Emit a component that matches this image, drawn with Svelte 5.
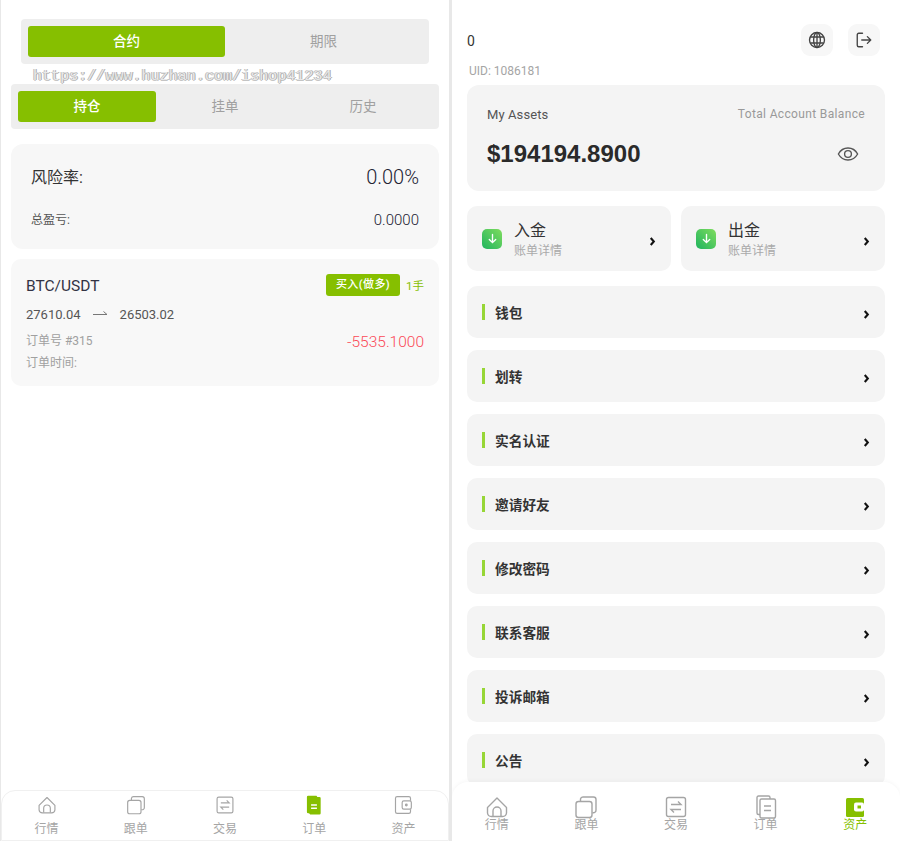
<script>
  const rows = ['钱包', '划转', '实名认证', '邀请好友', '修改密码', '联系客服', '投诉邮箱', '公告'];
  const money = [
    { title: '入金', sub: '账单详情' },
    { title: '出金', sub: '账单详情' }
  ];
  const tabs = ['行情', '跟单', '交易', '订单', '资产'];
</script>

{#snippet tabIcon(i, on)}
  {#if i === 0}
    <svg viewBox="0 0 24 24" width="24" height="24" fill="none" stroke="currentColor" stroke-width="1.4">
      <path d="M2.5 12.5 12 3l9.5 9.5V18a4 4 0 0 1-4 3.5h-11a4 4 0 0 1-4-3.500z" stroke-linejoin="round" />
      <path d="M8 21v-5a4 4 0 0 1 8 0v5" />
    </svg>
  {:else if i === 1}
    <svg viewBox="0 0 24 24" width="24" height="24" fill="none" stroke="currentColor" stroke-width="1.4">
      <rect x="2" y="6.5" width="16" height="16" rx="2.5" />
      <path d="M6.500 6V4a2.500 2.500 0 0 1 2.500-2h10.500A2.500 2.500 0 0 1 22 4.500V15a2.500 2.500 0 0 1-3.500 2.500" />
    </svg>
  {:else if i === 2}
    <svg viewBox="0 0 24 24" width="24" height="24" fill="none" stroke="currentColor" stroke-width="1.4">
      <rect x="2.500" y="2.500" width="19" height="19" rx="2" />
      <path d="M7 9.500h10l-3-3M17 14.500H7l3 3" />
    </svg>
  {:else if i === 3}
    {#if on}
      <svg viewBox="0 0 24 24" width="24" height="24">
        <path d="M5 1h10l1 1.500h2.500A1.500 1.500 0 0 1 20 4v18a1.500 1.500 0 0 1-1.500 1.500h-11L6 22H5a1.500 1.500 0 0 1-1.500-1.500v-18A1.500 1.500 0 0 1 5 1z" fill="#86bf00" />
        <path d="M8.500 11h7v1.800h-7zM8.500 15h7v1.800h-7z" fill="#fff" />
      </svg>
    {:else}
      <svg viewBox="0 0 24 24" width="24" height="24" fill="none" stroke="currentColor" stroke-width="1.4">
        <path d="M6 19.500H4.500A1.500 1.500 0 0 1 3 18V2.500A1.500 1.500 0 0 1 4.500 1h10A1.500 1.500 0 0 1 16 2.500V4" />
        <rect x="6" y="4" width="15.500" height="19" rx="1.500" />
        <path d="M10 11h7M10 15.500h7" />
      </svg>
    {/if}
  {:else if on}
    <svg viewBox="0 0 24 24" width="24" height="24">
      <rect x="3" y="3" width="18" height="19" rx="1.500" fill="#86bf00" />
      <rect x="11" y="7.500" width="10" height="9" rx="2" fill="#fff" />
      <rect x="14.500" y="10.500" width="3.500" height="3" fill="#86bf00" />
    </svg>
  {:else}
    <svg viewBox="0 0 24 24" width="24" height="24" fill="none" stroke="currentColor" stroke-width="1.4">
      <path d="M21 7V4a2 2 0 0 0-2-2H5a2 2 0 0 0-2 2v16a2 2 0 0 0 2 2h14a2 2 0 0 0 2-2v-3" />
      <rect x="11" y="7" width="11" height="10" rx="2" />
      <circle cx="16" cy="12" r="1" fill="currentColor" />
    </svg>
  {/if}
{/snippet}

<div class="page">
  <section class="phone left">
    <div class="seg seg-top">
      <div class="seg-item active">合约</div>
      <div class="seg-item">期限</div>
    </div>
    <div class="watermark">https://www.huzhan.com/ishop41234</div>
    <div class="seg seg-sub">
      <div class="seg-item active">持仓</div>
      <div class="seg-item">挂单</div>
      <div class="seg-item">历史</div>
    </div>

    <div class="risk">
      <div class="risk-line big"><span class="risk-label">风险率:</span><span class="risk-val">0.00%</span></div>
      <div class="risk-line small"><span>总盈亏:</span><span class="pl-val">0.0000</span></div>
    </div>

    <div class="order">
      <div class="order-head">
        <span class="pair">BTC/USDT</span>
        <div class="order-tag">
          <span class="badge">买入(做多)</span>
          <span class="lots">1手</span>
        </div>
      </div>
      <div class="prices">
        <span>27610.04</span>
        <svg class="arrow" viewBox="0 0 15 8" width="15" height="8" fill="none" stroke="#777" stroke-width="1">
          <path d="M0 4.500h14M10.500 1.500 14 4.500" />
        </svg>
        <span>26503.02</span>
      </div>
      <div class="order-foot">
        <div class="meta">
          <div>订单号 #315</div>
          <div>订单时间:</div>
        </div>
        <div class="loss">-5535.1000</div>
      </div>
    </div>

    <nav class="tabbar flat">
      {#each tabs as t, i}
        <div class="tab">
          {@render tabIcon(i, i === 3)}
          <span>{t}</span>
        </div>
      {/each}
    </nav>
  </section>

  <section class="phone right">
    <header class="top">
      <span class="zero">0</span>
      <div class="top-btns">
        <div class="round">
          <svg viewBox="0 0 24 24" width="18" height="18" fill="none" stroke="#444" stroke-width="1.800">
            <circle cx="12" cy="12" r="10" />
            <ellipse cx="12" cy="12" rx="4.500" ry="10" />
            <path d="M3 8h18M3 16h18M12 2v20" />
          </svg>
        </div>
        <div class="round">
          <svg viewBox="0 0 24 24" width="18" height="18" fill="none" stroke="#444" stroke-width="1.800" stroke-linecap="round" stroke-linejoin="round">
            <path d="M10 3H5a2 2 0 0 0-2 2v14a2 2 0 0 0 2 2h5" />
            <path d="M9 12h12M16.500 7.500 21 12l-4.500 4.500" />
          </svg>
        </div>
      </div>
    </header>
    <div class="uid">UID: 1086181</div>

    <div class="assets">
      <div class="assets-head">
        <span class="my">My Assets</span>
        <span class="total">Total Account Balance</span>
      </div>
      <div class="assets-body">
        <span class="amount">$194194.8900</span>
        <svg viewBox="0 0 24 24" width="22" height="22" fill="none" stroke="#555" stroke-width="1.500">
          <path d="M1.500 12C4 7.500 7.700 5.500 12 5.500s8 2 10.500 6.500c-2.500 4.500-6.200 6.500-10.500 6.500S4 16.500 1.500 12z" />
          <circle cx="12" cy="12" r="3.700" />
        </svg>
      </div>
    </div>

    <div class="money">
      {#each money as m}
        <div class="money-card">
          <div class="money-icon">
            <svg viewBox="0 0 12 12" width="11" height="11" fill="none" stroke="#fff" stroke-width="1.500" stroke-linecap="round" stroke-linejoin="round">
              <path d="M6 1.500v9M2.500 7 6 10.500 9.500 7" />
            </svg>
          </div>
          <div class="money-text">
            <div class="money-title">{m.title}</div>
            <div class="money-sub">{m.sub}</div>
          </div>
          <svg class="chev" viewBox="0 0 8 10" width="7" height="9" fill="none" stroke="#111" stroke-width="2.400"><path d="M2 1l3.500 4L2 9" /></svg>
        </div>
      {/each}
    </div>

    <div class="list">
      {#each rows as r}
        <div class="row">
          <span class="mark"></span>
          <span class="row-name">{r}</span>
          <svg class="chev" viewBox="0 0 8 10" width="7" height="9" fill="none" stroke="#111" stroke-width="2.400"><path d="M2 1l3.500 4L2 9" /></svg>
        </div>
      {/each}
    </div>

    <nav class="tabbar raised">
      {#each tabs as t, i}
        <div class="tab" class:tab-on={i === 4}>
          {@render tabIcon(i, i === 4)}
          <span>{t}</span>
        </div>
      {/each}
    </nav>
  </section>
</div>

<style>
  :global(body) { margin: 0; background: #fff; }
  .page {
    display: grid;
    grid-template-columns: 451px 449px;
    height: 841px;
    font-family: Roboto, "Noto Sans CJK SC", sans-serif;
    color: #333;
  }
  .phone { position: relative; height: 841px; overflow: hidden; box-sizing: border-box; background: #fff; }
  .left { border-left: 1px solid #e8e8e8; border-right: 2px solid #e8e8e8; }
  .right { padding: 0 15px; border-left: 1px solid #e8e8e8; }

  .seg { display: flex; background: #eee; border-radius: 4px; padding: 7px; height: 45px; box-sizing: border-box; }
  .seg-top { margin: 19px 20px 0; }
  .seg-sub { margin: 20px 10px 0; }
  .seg-item { flex: 1; display: flex; align-items: center; justify-content: center; font-size: 13.5px; line-height: 29px; padding-bottom: 1px; box-sizing: border-box; color: #a0a0a0; border-radius: 3px; }
  .seg-item.active { background: #86bf00; color: #fff; font-weight: 500; }

  .watermark {
    position: absolute;
    left: 32px;
    top: 68px;
    font: 15px/17px "Liberation Mono", monospace;
    letter-spacing: 0.05px;
    color: #e8e8e8;
    text-shadow: 1px 0 0 #aaa, -1px 0 0 #bbb, 0 1px 0 #c4c4c4;
  }

  .risk { margin: 15px 10px 0; height: 105px; box-sizing: border-box; padding: 20px 20px 0; background: #f7f7f7; border-radius: 12px; }
  .risk-line { display: flex; justify-content: space-between; align-items: center; }
  .big { height: 26px; color: #333; }
  .risk-label { font-size: 16px; line-height: 24px; padding-top: 2px; }
  .risk-val { font-size: 20px; font-weight: 300; color: #223; }
  .small { margin-top: 20px; height: 20px; font-size: 12px; color: #555; }
  .small span:first-child { margin-top: -3px; }
  .pl-val { font-size: 15px; font-weight: 300; color: #223; }

  .order { margin: 10px 10px 0; height: 127px; box-sizing: border-box; padding: 15px 15px 0; background: #f8f8f8; border-radius: 10px; }
  .order-head { display: flex; justify-content: space-between; align-items: center; height: 22px; }
  .pair { font-size: 15.5px; color: #334; padding-top: 1px; }
  .order-tag { display: flex; align-items: center; gap: 6px; }
  .badge { background: #86bf00; color: #fff; font-size: 11px; font-weight: 500; letter-spacing: 0.4px; line-height: 22px; padding: 0 10px; border-radius: 3px; }
  .lots { font-size: 11.5px; color: #86bf00; }
  .prices { display: flex; align-items: center; gap: 12px; margin-top: 8px; font-size: 13px; color: #555; height: 20px; }
  .order-foot { display: flex; justify-content: space-between; align-items: flex-start; margin-top: 6px; }
  .meta { font-size: 12px; color: #a0a0a0; line-height: 22px; }
  .loss { font-size: 15.5px; font-weight: 300; line-height: 22px; margin-top: 1px; color: #fb4a57; }

  .top { display: flex; justify-content: space-between; align-items: center; padding-top: 24px; padding-right: 5px; height: 32px; }
  .zero { font-size: 14px; color: #333; position: relative; top: 1px; }
  .top-btns { display: flex; gap: 15px; }
  .round { width: 32px; height: 32px; border-radius: 9px; background: #f7f7f7; display: flex; align-items: center; justify-content: center; }
  .uid { margin: 8px 0 0 2px; font-size: 12px; line-height: 15px; color: #a5a5a5; }

  .assets { margin-top: 6px; height: 106px; box-sizing: border-box; padding: 20px 20px 0; background: #f4f4f4; border-radius: 12px; }
  .assets-head { display: flex; justify-content: space-between; align-items: center; height: 18px; }
  .my { font-size: 13px; color: #555; letter-spacing: 0.1px; }
  .total { font-size: 12px; color: #999; letter-spacing: 0.35px; }
  .assets-body { display: flex; justify-content: space-between; align-items: center; margin-top: 17px; padding-right: 6px; }
  .amount { font: bold 24px/28px "Liberation Sans", sans-serif; color: #2a2a2a; }

  .money { display: grid; grid-template-columns: 1fr 1fr; gap: 10px; margin-top: 15px; }
  .money-card { display: flex; align-items: center; height: 65px; padding: 0 15px; box-sizing: border-box; background: #f4f4f4; border-radius: 10px; }
  .money-icon { width: 20px; height: 20px; border-radius: 5px; background: linear-gradient(45deg, #1fb45e, #7fdc5e); display: flex; align-items: center; justify-content: center; }
  .money-text { flex: 1; margin-left: 12px; padding-top: 2px; }
  .money-title { font-size: 16px; line-height: 21px; color: #333; }
  .money-sub { font-size: 12px; line-height: 16px; margin-top: 2px; color: #aaa; }
  .chev { margin-top: 5px; }

  .list { display: flex; flex-direction: column; gap: 12px; margin-top: 15px; }
  .row { display: flex; align-items: center; flex: none; height: 52px; padding: 0 15px; box-sizing: border-box; background: #f4f4f4; border-radius: 10px; }
  .mark { width: 3px; height: 16px; background: #97d636; }
  .row-name { flex: 1; margin-left: 10px; font-size: 13.7px; font-weight: 700; color: #333; }

  .tabbar { position: absolute; display: flex; left: 0; right: 0; bottom: 0; background: #fff; box-sizing: border-box; }
  .flat { height: 51px; padding: 4px 0 0; border: 1px solid #f0f0f0; border-radius: 14px 14px 0 0; }
  .raised { height: 59px; padding-top: 13px; border-radius: 16px 16px 0 0; box-shadow: 0 -1px 4px rgba(0, 0, 0, 0.04); }
  .tab { flex: 1; display: flex; flex-direction: column; align-items: center; color: #a5a5a5; font-size: 12px; line-height: 14px; }
  .raised .tab { gap: 0; }
  .raised .tab svg { margin-bottom: -1px; }
  .flat .tab { gap: 7px; }
  .flat .tab svg { width: 20px; height: 20px; }
  .tab-on { color: #86bf00; }
</style>
